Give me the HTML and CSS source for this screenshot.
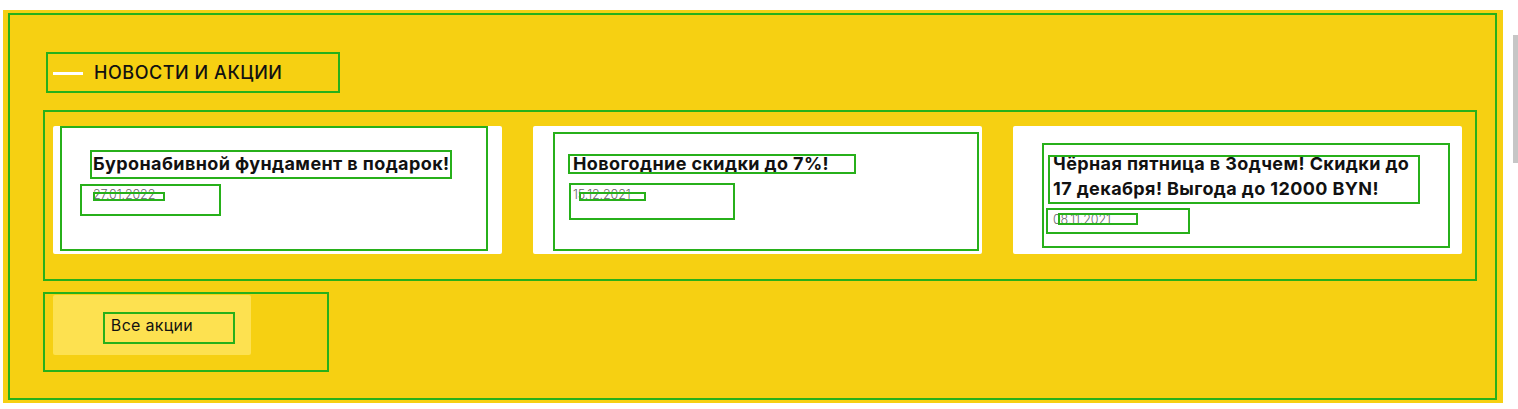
FILE: index.html
```html
<!DOCTYPE html>
<html lang="ru">
<head>
<meta charset="utf-8">
<title>Новости и акции</title>
<link rel="stylesheet" href="styles.css">
</head>
<body>
<div class="page">
  <section class="section">
    <div class="heading">
      <span class="heading-line"></span>
      <h2 class="heading-title">НОВОСТИ И АКЦИИ</h2>
    </div>
    <div class="cards">
      <article class="card card-1">
        <h3 class="card-title">Буронабивной фундамент в подарок!</h3>
        <div class="card-date">27.01.2022</div>
        <span class="mark mark-inner"></span>
        <span class="mark mark-title"></span>
        <span class="mark mark-date"></span>
        <span class="mark mark-date-in"></span>
      </article>
      <article class="card card-2">
        <h3 class="card-title">Новогодние скидки до 7%!</h3>
        <div class="card-date">15.12.2021</div>
        <span class="mark mark-inner"></span>
        <span class="mark mark-title"></span>
        <span class="mark mark-date"></span>
        <span class="mark mark-date-in"></span>
      </article>
      <article class="card card-3">
        <h3 class="card-title">Чёрная пятница в Зодчем! Скидки до 17 декабря! Выгода до 12000 BYN!</h3>
        <div class="card-date">08.11.2021</div>
        <span class="mark mark-inner"></span>
        <span class="mark mark-title"></span>
        <span class="mark mark-date"></span>
        <span class="mark mark-date-in"></span>
      </article>
    </div>
    <div class="more">
      <a class="more-btn" href="#">Все акции<span class="mark mark-btn"></span></a>
    </div>
  </section>
</div>
<div class="scroll-thumb"></div>
</body>
</html>
```
FILE: styles.css
```css
* { box-sizing: border-box; }
html, body { margin: 0; padding: 0; background: #ffffff; }
body {
  font-family: Inter, "Noto Sans", sans-serif;
  color: #111111;
  height: 409px;
  overflow: hidden;
}
.page {
  margin: 10px 0 0 3px;
  width: 1500px;
  height: 393px;
  background: #f6d012;
  padding: 3px 6px 3px 5px;
}
.section {
  border: 2px solid #27b01a;
  height: 387px;
  padding: 37px 0 0 33px;
}
.heading {
  width: 294px;
  height: 41px;
  margin-left: 3px;
  border: 2px solid #27b01a;
  display: flex;
  align-items: center;
  padding-left: 5px;
}
.heading-line {
  width: 30px;
  height: 3px;
  background: #ffffff;
  margin-right: 11px;
  margin-top: 2px;
}
.heading-title {
  margin: 0;
  font-size: 18px;
  font-weight: 500;
  line-height: 24px;
  letter-spacing: 0.55px;
  color: #111111;
}
.cards {
  margin-top: 17px;
  width: 1434px;
  height: 171px;
  border: 2px solid #27b01a;
  padding: 14px 13px 0 8px;
  display: flex;
  gap: 31px;
}
.card {
  position: relative;
  width: 449px;
  height: 128px;
  background: #ffffff;
  border-radius: 2px;
  padding: 25px 40px 0 40px;
}
.card-title {
  margin: 0;
  font-size: 18px;
  font-weight: 700;
  line-height: 25px;
  letter-spacing: 0.4px;
  color: #111111;
}
.card-date {
  margin-top: 10px;
  font-size: 12.5px;
  font-weight: 300;
  line-height: 18px;
  letter-spacing: -0.1px;
  color: #666666;
}
.mark {
  position: absolute;
  border: 2px solid #27b01a;
  pointer-events: none;
}
.card-1 .mark-inner { left: 7px; top: 0; width: 428px; height: 125px; }
.card-1 .mark-title { left: 37px; top: 24px; width: 362px; height: 29px; }
.card-1 .mark-date { left: 27px; top: 58px; width: 141px; height: 32px; }
.card-1 .mark-date-in { left: 40px; top: 66px; width: 72px; height: 9px; }
.card-2 .mark-inner { left: 20px; top: 6px; width: 426px; height: 119px; }
.card-2 .mark-title { left: 35px; top: 28px; width: 288px; height: 20px; }
.card-2 .mark-date { left: 36px; top: 57px; width: 166px; height: 37px; }
.card-2 .mark-date-in { left: 46px; top: 66px; width: 67px; height: 9px; }
.card-3 .mark-inner { left: 29px; top: 17px; width: 408px; height: 105px; }
.card-3 .mark-title { left: 35px; top: 29px; width: 372px; height: 49px; }
.card-3 .mark-date { left: 33px; top: 82px; width: 144px; height: 26px; }
.card-3 .mark-date-in { left: 45px; top: 87px; width: 80px; height: 12px; }
.more {
  margin-top: 11px;
  width: 286px;
  height: 80px;
  border: 2px solid #27b01a;
  padding: 1px 0 0 8px;
}
.more-btn {
  position: relative;
  display: flex;
  align-items: center;
  justify-content: center;
  width: 198px;
  height: 60px;
  background: #fde150;
  border-radius: 2px;
  font-size: 16px;
  font-weight: 400;
  letter-spacing: 0.3px;
  color: #111111;
  text-decoration: none;
}
.mark-btn { left: 50px; top: 17px; width: 132px; height: 32px; }
.scroll-thumb {
  position: fixed;
  left: 1513px;
  top: 35px;
  width: 5px;
  height: 128px;
  background: #c6c6c6;
}
```
